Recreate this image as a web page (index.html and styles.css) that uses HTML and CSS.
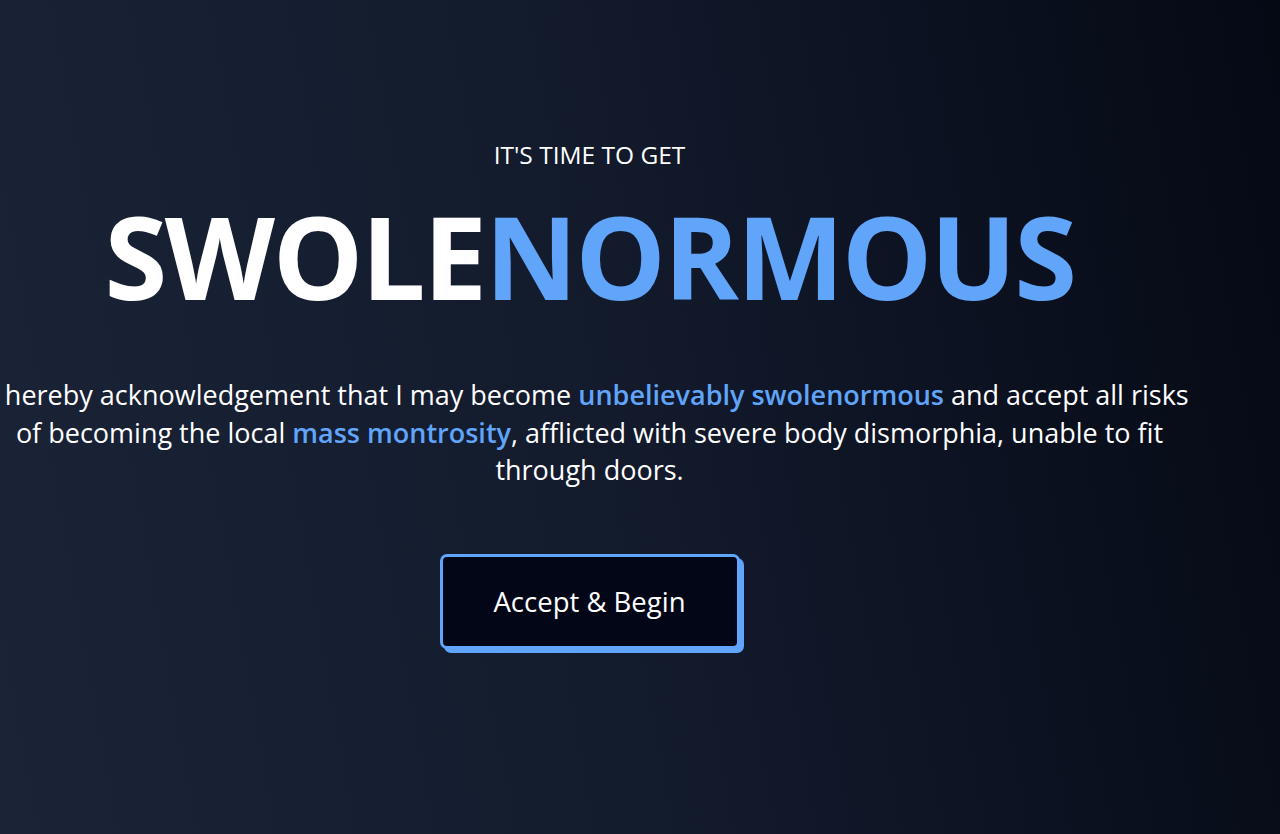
FILE: index.html
```html
<!DOCTYPE html>
<html lang="en">
<head>
<meta charset="utf-8">
<title>Swolenormous</title>
<link rel="stylesheet" href="styles.css">
</head>
<body>
<main class="hero">
  <p class="eyebrow">It's time to get</p>
  <h1 class="title"><span class="title-white">SWOLE</span><span class="title-blue">NORMOUS</span></h1>
  <p class="pledge">I hereby acknowledgement that I may become <strong class="hl">unbelievably swolenormous</strong> and accept all risks<br>of becoming the local <strong class="hl">mass montrosity</strong>, afflicted with severe body dismorphia, unable to fit<br>through doors.</p>
  <button class="cta" type="button">Accept &amp; Begin</button>
</main>
</body>
</html>
```
FILE: styles.css
```css
html, body {
  margin: 0;
  height: 100%;
}
body {
  background: linear-gradient(80deg, #1b2337 0%, #121a2c 50%, #050914 100%);
  color: #ffffff;
  font-family: "Open Sans", "Noto Sans", sans-serif;
  overflow: hidden;
}
.hero {
  display: flex;
  flex-direction: column;
  align-items: center;
  padding: 138px 101px 0 0;
}
.eyebrow {
  margin: 0;
  font-size: 24.5px;
  line-height: 34px;
  text-transform: uppercase;
  font-weight: 400;
}
.title {
  margin: 14px 0 0;
  font-size: 114px;
  line-height: 140px;
  font-weight: 700;
  letter-spacing: -2.3px;
  white-space: nowrap;
}
.title-blue { color: #60a5fa; }
.pledge {
  margin: 50px 0 0;
  width: 1230px;
  flex: none;
  text-align: center;
  font-size: 27px;
  line-height: 37.5px;
  font-weight: 400;
}
.hl {
  color: #60a5fa;
  font-weight: 600;
}
.cta {
  margin-top: 65px;
  width: 300px;
  height: 95px;
  box-sizing: border-box;
  background: #030617;
  color: #ffffff;
  border: 3px solid #60a5fa;
  border-radius: 7px;
  box-shadow: 4px 4px 0 #60a5fa;
  font-family: "Open Sans", "Noto Sans", sans-serif;
  font-size: 27.5px;
  cursor: pointer;
}
```
